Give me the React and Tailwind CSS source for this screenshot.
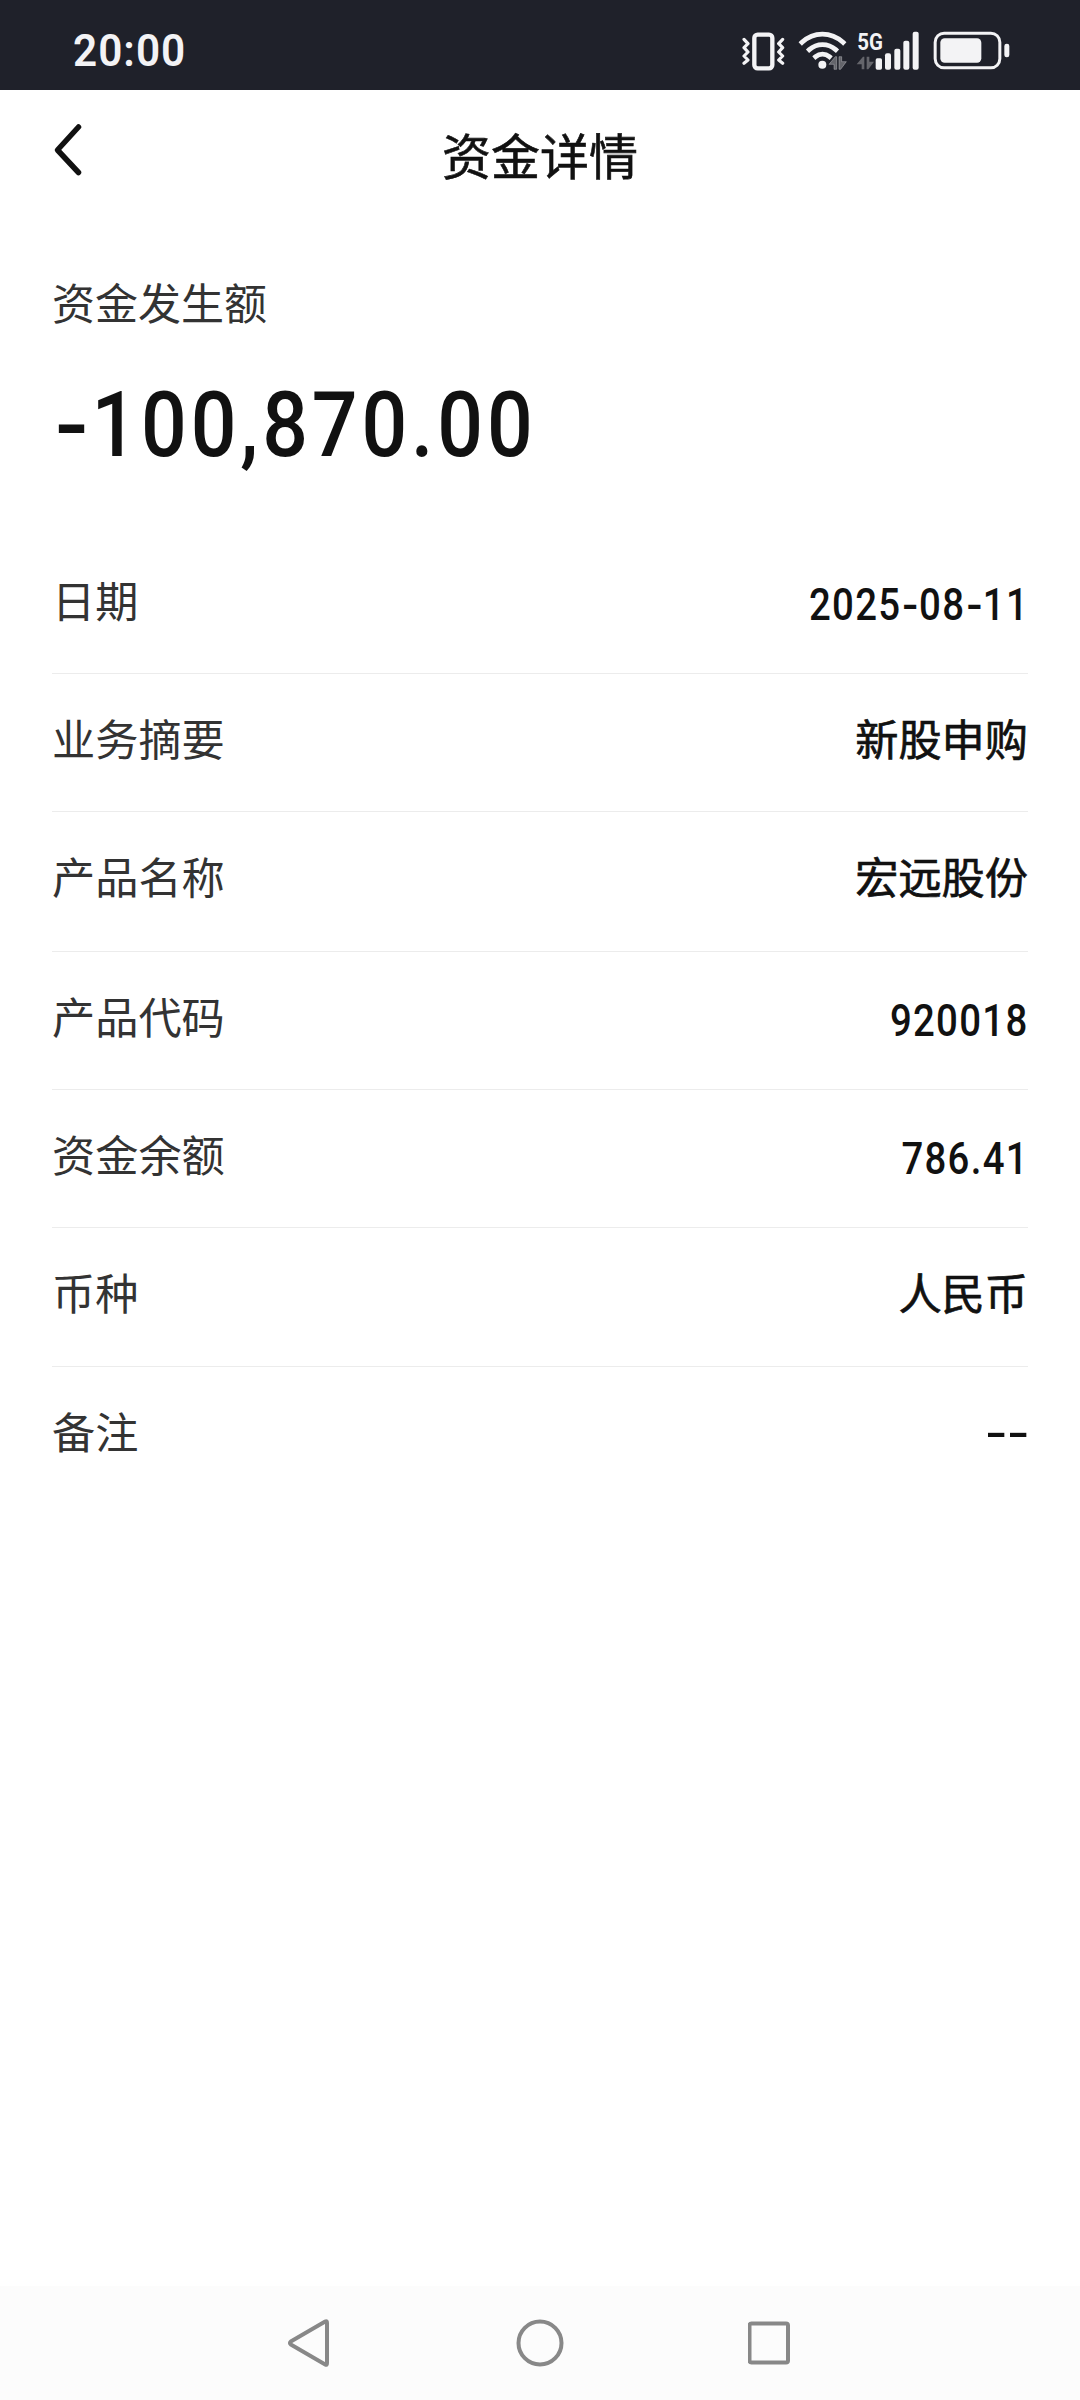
import React from "react";

const rows = [
  { label: "日期", value: "2025-08-11", numeric: true, height: "h-[138px]" },
  { label: "业务摘要", value: "新股申购", height: "h-[138px]" },
  { label: "产品名称", value: "宏远股份", height: "h-[140px]" },
  { label: "产品代码", value: "920018", numeric: true, height: "h-[138px]" },
  { label: "资金余额", value: "786.41", numeric: true, height: "h-[138px]" },
  { label: "币种", value: "人民币", height: "h-[139px]" },
  { label: "备注", value: "--", numeric: true, dash: "wide", height: "h-[138px]" },
];

const dashStyles = {
  normal: "inline-block w-[0.458em] scale-x-[1.22] text-center tracking-normal",
  large: "inline-block w-[0.49em] scale-x-[1.22] text-center tracking-normal",
  wide: "inline-block w-[0.579em] scale-x-[1.65] text-center tracking-normal",
};

function Numeric({ text, dash = "normal" }) {
  return text.split(/(-)/).map((part, i) =>
    part === "-" ? <span key={i} className={dashStyles[dash]}>-</span> : part
  );
}

function StatusBar() {
  return (
    <header className="flex h-[90px] items-start justify-between bg-[#1f212a] pl-[73px] pr-[70px] text-[#f3f3f5]">
      <div className="mt-[25px] origin-left scale-x-[0.94] font-['Roboto',sans-serif] text-[45px] font-semibold leading-[52px] tracking-[0.024em]">20:00</div>
      <div className="mt-[30px] flex h-[42px]">
        <svg className="h-[42px] w-[43px]" viewBox="65 60 129 126" fill="none" stroke="currentColor">
          <rect x="102" y="74" width="54" height="101" rx="10" strokeWidth="13" />
          <path d="M71 88l12 13-12 12 12 13-12 12 12 12-12 10M187 88l-12 13 12 12-12 13 12 12-12 12 12 10" strokeWidth="9.500" strokeLinecap="round" strokeLinejoin="round" />
        </svg>
        <svg className="ml-[14px] h-[42px] w-[48px] overflow-visible" viewBox="236 60 144 126" fill="none" stroke="currentColor">
          <path d="M245 97C280 64 332 64 368 97M267 119C290 99 323 99 346 119M286 140C298 130 315 130 327 140" strokeWidth="14.500" strokeLinecap="square" />
          <circle cx="306" cy="164" r="12" fill="currentColor" stroke="none" />
          <path d="M326 163L345 140H349V178H341V163ZM356 140H364V155H378L361 178H356Z" fill="#64656b" />
        </svg>
        <svg className="ml-[9px] h-[42px] w-[64px] overflow-visible" viewBox="407 60 192 126">
          <text x="411" y="120" fill="currentColor" fontFamily="Roboto, sans-serif" fontSize="74" fontWeight="700" textLength="77" lengthAdjust="spacingAndGlyphs">5G</text>
          <path d="M409 163L428 140H432V178H424V163ZM439 140H447V155H461L444 178H439Z" fill="#64656b" />
          <g fill="currentColor">
            <rect x="466" y="145" width="19" height="34" rx="5" />
            <rect x="494" y="130" width="18" height="49" rx="6" />
            <rect x="522" y="116" width="18" height="63" rx="6" />
            <rect x="549" y="92" width="18" height="87" rx="6" />
            <rect x="577" y="65" width="18" height="114" rx="6" />
          </g>
        </svg>
        <svg className="ml-[13px] h-[42px] w-[77px]" viewBox="638 60 231 126">
          <rect x="644.500" y="69.500" width="194" height="104" rx="27" fill="none" stroke="currentColor" strokeWidth="9" />
          <rect x="660" y="85" width="123" height="73" rx="13" fill="currentColor" />
          <rect x="852" y="101" width="15" height="41" rx="7" fill="currentColor" />
        </svg>
      </div>
    </header>
  );
}

function TitleBar() {
  return (
    <div className="grid h-[134px] grid-cols-[1fr_auto_1fr] items-start pl-[53px] pr-[53px]">
      <svg className="mt-[32px] h-[56px] w-[30px]" viewBox="0 0 30 56" fill="none" stroke="#111" strokeWidth="5.500" strokeLinecap="round" strokeLinejoin="round">
        <path d="M25.500 5L4.500 28L25.500 50.500" />
      </svg>
      <h1 className="mt-[29px] text-[49px] leading-[70px] text-[#111] [-webkit-text-stroke:0.6px_#111]">资金详情</h1>
      <span />
    </div>
  );
}

function NavBar() {
  return (
    <nav className="flex h-[114px] items-start justify-between bg-[#fcfcfc] pl-[287px] pr-[289px] pt-[32px]">
      <svg className="h-[50px] w-[43px]" viewBox="0 0 43 50" fill="none" stroke="#888" strokeWidth="4" strokeLinejoin="round">
        <path d="M38.200 3.500Q40 2.500 40 5V45Q40 47.500 38.200 46.500L3.800 26.500Q2 25 3.800 23.500Z" />
      </svg>
      <svg className="h-[50px] w-[50px]" viewBox="0 0 50 50" fill="none" stroke="#888" strokeWidth="4">
        <circle cx="26" cy="25" r="21.500" />
      </svg>
      <svg className="h-[50px] w-[43px]" viewBox="0 0 43 50" fill="none" stroke="#888" strokeWidth="4">
        <rect x="1.500" y="5.500" width="38.500" height="39" rx="2" />
      </svg>
    </nav>
  );
}

export default function App() {
  return (
    <div className="flex h-[2400px] w-[1080px] flex-col overflow-hidden bg-white font-['Noto_Sans_CJK_SC',sans-serif]">
      <StatusBar />
      <TitleBar />
      <main className="flex-1 px-[52px]">
        <p className="mt-[47px] text-[43px] leading-[60px] text-[#333]">资金发生额</p>
        <p className="mt-[39px] h-[110px] w-max origin-left scale-x-[0.88] whitespace-nowrap font-['Roboto',sans-serif] text-[91.500px] font-medium leading-[110px] tracking-[0.048em] text-[#111]">
          <Numeric text="-100,870.00" dash="large" />
        </p>
        <dl className="mt-[56px]">
          {rows.map((row, i) => (
            <div
              key={row.label}
              className={`flex items-start justify-between pt-[33px] ${row.height} ${i < rows.length - 1 ? "border-b border-[#ececec]" : ""}`}
            >
              <dt className="text-[43.200px] leading-[60px] text-[#333]">{row.label}</dt>
              {row.numeric ? (
                <dd className={`mr-[-1px] origin-right scale-x-[0.88] whitespace-nowrap font-['Roboto',sans-serif] text-[43.600px] font-medium leading-[60px] tracking-[0.034em] text-[#111] ${row.dash ? "mt-[4px]" : "mt-[7px]"}`}>
                  <Numeric text={row.value} dash={row.dash} />
                </dd>
              ) : (
                <dd className="text-[43.200px] leading-[60px] text-[#111] [-webkit-text-stroke:0.7px_#111]">{row.value}</dd>
              )}
            </div>
          ))}
        </dl>
      </main>
      <NavBar />
    </div>
  );
}
